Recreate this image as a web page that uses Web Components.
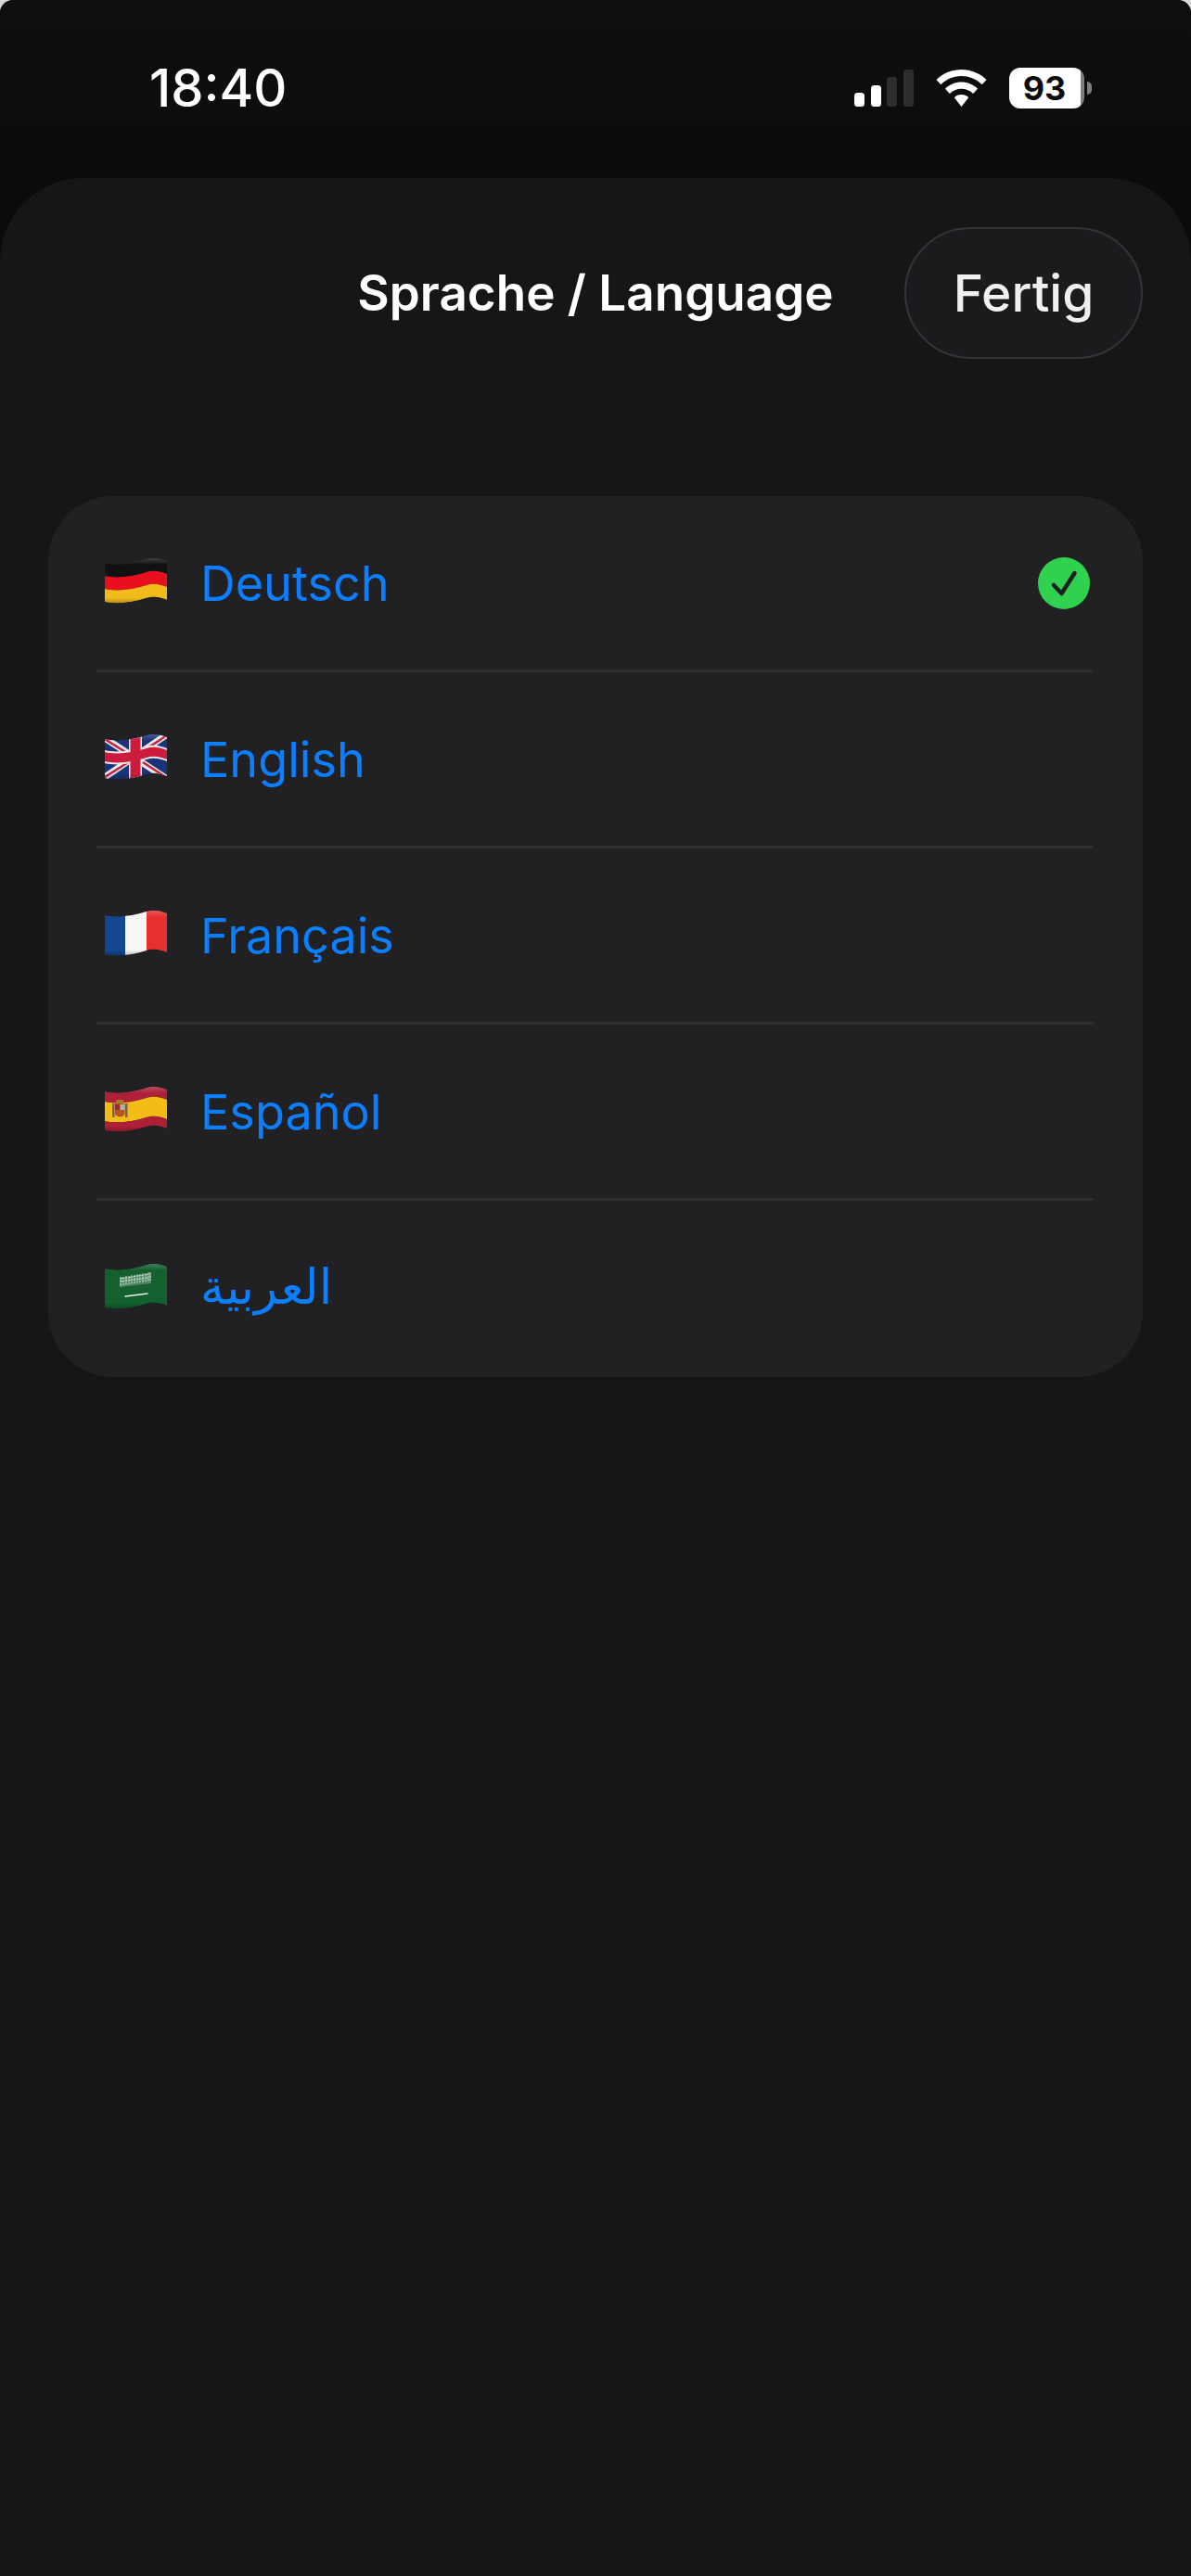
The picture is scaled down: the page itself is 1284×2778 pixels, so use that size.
<!DOCTYPE html>
<html lang="de">
<head>
<meta charset="utf-8">
<title>Sprache / Language</title>
<style>
  html { height: 100%; background: #d8d8d8; }
  body { margin: 0; height: 100%; background: #0b0b0b; border-radius: 14px 14px 0 0; display: flex; flex-direction: column; font-family: Inter, "Liberation Sans", sans-serif; }
</style>
</head>
<body>
<status-bar time="18:40" battery="93"></status-bar>
<sheet-view>
  <sheet-header slot="header" title-text="Sprache / Language" action="Fertig"></sheet-header>
  <language-list>
    <language-row selected><flag-icon slot="flag" code="de"></flag-icon>Deutsch</language-row>
    <language-row><flag-icon slot="flag" code="gb"></flag-icon>English</language-row>
    <language-row><flag-icon slot="flag" code="fr"></flag-icon>Français</language-row>
    <language-row><flag-icon slot="flag" code="es"></flag-icon>Español</language-row>
    <language-row last><flag-icon slot="flag" code="sa"></flag-icon><span lang="ar" style="font-family:'DejaVu Sans',sans-serif;font-size:52px;position:relative;top:-3px">العربية</span></language-row>
  </language-list>
</sheet-view>

<script>
class StatusBar extends HTMLElement {
    constructor() {
        super();
        this.attachShadow({ mode: 'open' });
        this.shadowRoot.innerHTML = `
            <style>
                :host { display: flex; flex: none; height: 192px; box-sizing: border-box; padding: 0 107px 0 161px; justify-content: space-between; border-radius: 14px 14px 0 0; background: linear-gradient(#0f0f0f, #0b0b0b); color: #fff; }
                .time { font-size: 56px; font-weight: 500; line-height: 66px; margin-top: 62px; }
                .icons { display: flex; align-items: flex-start; margin-top: 73px; }
                svg { display: block; }
                .wifi { margin-left: 24px; margin-top: 2px; }
                .battery { display: flex; align-items: center; margin-left: 24px; }
                .cell { width: 81px; height: 44px; box-sizing: border-box; border-radius: 12px; font: 700 36px/44px Inter, sans-serif; color: #0b0b0b; text-align: center; padding-right: 5px; background: linear-gradient(90deg, #fff 95%, #7d7d7d 95%); }
                .nub { width: 5px; height: 14px; margin-left: 3px; background: #7d7d7d; border-radius: 0 7px 7px 0; }
            </style>
            <span class="time">${this.getAttribute('time')}</span>
            <div class="icons">
                <svg width="64" height="42" viewBox="0 0 64 42">
                    <rect x="0" y="27" width="11" height="15" rx="3.5" fill="#fff"/>
                    <rect x="18" y="19" width="11" height="23" rx="3.5" fill="#fff"/>
                    <rect x="35" y="10" width="11" height="32" rx="3.5" fill="#2e2e2e"/>
                    <rect x="53" y="2" width="11" height="40" rx="3.5" fill="#2e2e2e"/>
                </svg>
                <svg class="wifi" width="55" height="40" viewBox="0 0 55 40">
                    <path fill="#fff" d="M27.5 0C17 0 7.500 4 .5 11l4.800 5.200C11 10.400 19 7 27.500 7s16.500 3.400 22.200 9.200L54.500 11C47.500 4 38 0 27.500 0z"/>
                    <path fill="#fff" d="M27.500 13.500c-6.800 0-13 2.700-17.500 7.200l4.900 5.200c3.200-3.200 7.700-5.200 12.600-5.200s9.400 2 12.600 5.200l4.900-5.200c-4.500-4.500-10.700-7.200-17.500-7.200z"/>
                    <path fill="#fff" d="M27.500 27c-3 0-5.700 1.200-7.700 3.200L27.500 40l7.700-9.800c-2-2-4.700-3.200-7.700-3.200z"/>
                </svg>
                <div class="battery"><div class="cell">${this.getAttribute('battery')}</div><div class="nub"></div></div>
            </div>
        `;
    }
}

class SheetView extends HTMLElement {
    constructor() {
        super();
        this.attachShadow({ mode: 'open' });
        this.shadowRoot.innerHTML = `
            <style>
                :host { display: flex; flex-direction: column; flex: 1; background: #161616; border-radius: 90px 90px 0 0; padding: 53px 52px 0; }
                ::slotted(language-list) { margin-top: 148px; }
            </style>
            <slot name="header"></slot>
            <slot></slot>
        `;
    }
}

class SheetHeader extends HTMLElement {
    constructor() {
        super();
        this.attachShadow({ mode: 'open' });
        this.shadowRoot.innerHTML = `
            <style>
                :host { display: grid; grid-template-columns: 1fr auto 1fr; align-items: center; color: #fff; }
                h1 { grid-column: 2; margin: 0; font-size: 53px; font-weight: 600; white-space: nowrap; }
                button { grid-column: 3; justify-self: end; width: 257px; height: 142px; box-sizing: border-box; border: 2px solid #34343a; border-radius: 71px; background: #1b1b1d; color: #f0f0f0; font: 500 55px Inter, sans-serif; padding: 0; }
            </style>
            <h1>${this.getAttribute('title-text')}</h1>
            <button type="button">${this.getAttribute('action')}</button>
        `;
    }
}

class LanguageList extends HTMLElement {
    constructor() {
        super();
        this.attachShadow({ mode: 'open' });
        this.shadowRoot.innerHTML = `
            <style>
                :host { display: block; background: #212123; border-radius: 70px; }
            </style>
            <slot></slot>
        `;
    }
}

class LanguageRow extends HTMLElement {
    constructor() {
        super();
        this.attachShadow({ mode: 'open' });
        const check = this.hasAttribute('selected') ? `
            <svg class="check" width="56" height="56" viewBox="0 0 56 56">
                <circle cx="28" cy="28" r="28" fill="#30d14e"/>
                <path d="M17 30l8.500 9L39.500 17" fill="none" stroke="#1f2024" stroke-width="4.500" stroke-linecap="round" stroke-linejoin="round"/>
            </svg>` : '';
        const divider = this.hasAttribute('last') ? '' : '<div class="divider"></div>';
        this.shadowRoot.innerHTML = `
            <style>
                :host { display: block; color: #0b7fff; font-size: 52.2px; }
                .row { display: flex; align-items: center; height: 187px; padding: 0 57px 0 61px; gap: 36px; }
                .label { flex: 1; }
                .divider { height: 3px; margin: 0 53px 0 52px; background: #2f2f32; }
                :host([last]) .row { height: 190px; }
            </style>
            <div class="row">
                <slot name="flag"></slot>
                <span class="label"><slot></slot></span>
                ${check}
            </div>
            ${divider}
        `;
    }
}

// wavy band between two heights, same wave as the flag outline
function band(y0, y1) {
    const top = `M0 ${y0}C12 ${y0 + 3} 30 ${y0 + 1} 45 ${y0 - 4}C52 ${y0 - 6.5} 60 ${y0 - 5} 67 ${y0 - 2}`;
    const bottom = `L67 ${y1 - 2}C60 ${y1 - 5} 52 ${y1 - 6.5} 45 ${y1 - 4}C30 ${y1 + 1} 12 ${y1 + 3} 0 ${y1}Z`;
    return top + bottom;
}

const FLAGS = {
    de: `<path d="${band(5, 19)}" fill="#111"/><path d="${band(19, 33)}" fill="#e80f1e"/><path d="${band(33, 47)}" fill="#f2bb1c"/>`,
    fr: `<rect x="0" width="22" height="50" fill="#13478f"/><rect x="22" width="23" height="50" fill="#f6f6f6"/><rect x="45" width="22" height="50" fill="#e5302f"/>`,
    gb: `<rect width="67" height="50" fill="#1b3378"/>
         <path d="M0 4L67 48M67 0L0 46" stroke="#e8e8ea" stroke-width="7"/>
         <path d="M0 5L27 22M67 1L41 18M67 47L41 30M0 46L27 29" stroke="#c4203e" stroke-width="2.500"/>
         <rect x="26" width="14" height="50" fill="#e8e8ea"/>
         <path d="${band(17, 31)}" fill="#e8e8ea"/>
         <rect x="27.500" width="11" height="50" fill="#cc1c3e"/>
         <path d="${band(19, 29)}" fill="#cc1c3e"/>`,
    es: `<path d="${band(5, 16)}" fill="#ad2038"/><path d="${band(16, 37)}" fill="#f3bd16"/><path d="${band(37, 47)}" fill="#ad2038"/>
         <rect x="8" y="18" width="2.500" height="15" fill="#6e6460"/><rect x="22" y="18" width="2.500" height="15" fill="#6e6460"/>
         <rect x="12" y="14" width="8.500" height="4" rx="2" fill="#a87a22"/>
         <path d="M11 18h10.500v12q-5 5-10.500 0z" fill="#b3562a"/>
         <rect x="16.500" y="19" width="5" height="6" fill="#b5b0ac"/>
         <rect x="11" y="19" width="5" height="6" fill="#9c2a22"/>`,
    sa: `<path d="${band(5, 47)}" fill="#14602f"/>
         <path d="M16 15l34-5v11l-34 4z" fill="#dfe9dd" opacity=".3"/>
         <path d="M17 14v10M20 14v9M23 13v10M26 13v9M29 12v10M32 12v9M35 11v10M38 11v9M41 10v10M44 10v9M47 9v10M49 9v9" stroke="#f4f7f2" stroke-width=".8" stroke-dasharray="2.500 1" fill="none"/>
         <path d="M17 19l32-4M17 16l32-5" stroke="#f4f7f2" stroke-width=".6" stroke-dasharray="3 1.500" fill="none"/>
         <path d="M22 35l24-3" stroke="#eef3ec" stroke-width="1.300" stroke-linecap="round"/>`
};

class FlagIcon extends HTMLElement {
    constructor() {
        super();
        this.attachShadow({ mode: 'open' });
        const code = this.getAttribute('code');
        this.shadowRoot.innerHTML = `
            <style>
                :host { display: block; flex: none; width: 67px; height: 50px; margin-bottom: 4px; }
                svg { display: block; overflow: visible; filter: blur(.35px); }
            </style>
            <svg width="67" height="50" viewBox="0 0 67 50">
                <defs>
                    <clipPath id="w"><path d="${band(5, 47)}"/></clipPath>
                    <linearGradient id="s" x1="0" y1="0" x2="0" y2="1">
                        <stop offset="0" stop-color="#fff" stop-opacity=".2"/>
                        <stop offset=".14" stop-color="#fff" stop-opacity="0"/>
                        <stop offset=".85" stop-color="#000" stop-opacity="0"/>
                        <stop offset="1" stop-color="#000" stop-opacity=".3"/>
                    </linearGradient>
                </defs>
                <g clip-path="url(#w)">
                    ${FLAGS[code]}
                    <rect width="67" height="50" fill="url(#s)"/>
                </g>
            </svg>
        `;
    }
}

customElements.define('status-bar', StatusBar);
customElements.define('sheet-view', SheetView);
customElements.define('sheet-header', SheetHeader);
customElements.define('language-list', LanguageList);
customElements.define('language-row', LanguageRow);
customElements.define('flag-icon', FlagIcon);
</script>
</body>
</html>
